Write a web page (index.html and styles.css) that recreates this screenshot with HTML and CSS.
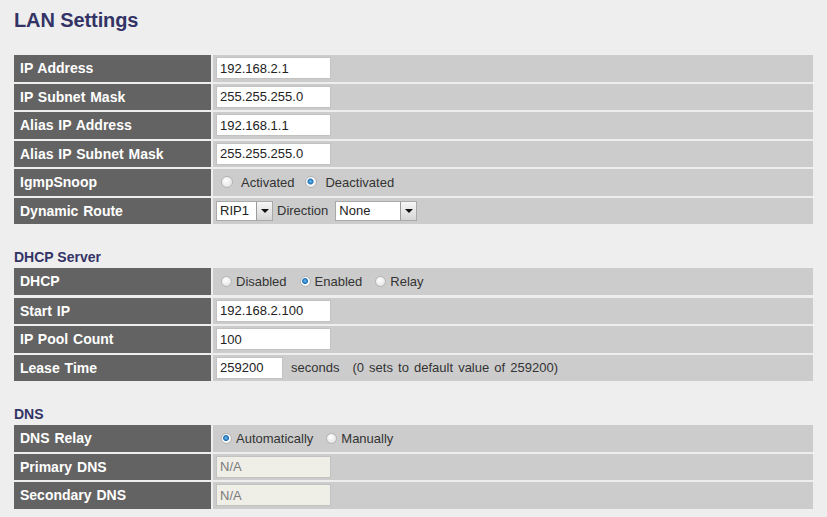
FILE: index.html
```html
<!DOCTYPE html>
<html lang="en">
<head>
    <meta charset="UTF-8">
    <meta name="viewport" content="width=device-width, initial-scale=1.0">
    <title>LAN Settings</title>
    <link rel="stylesheet" href="styles.css">
</head>
<body>
    <h1 class="page-title">LAN Settings</h1>

    <div class="form-grid">
        <div class="label">IP Address</div>
        <div class="value"><input class="field" type="text" value="192.168.2.1"></div>

        <div class="label">IP Subnet Mask</div>
        <div class="value"><input class="field" type="text" value="255.255.255.0"></div>

        <div class="label">Alias IP Address</div>
        <div class="value"><input class="field" type="text" value="192.168.1.1"></div>

        <div class="label">Alias IP Subnet Mask</div>
        <div class="value"><input class="field" type="text" value="255.255.255.0"></div>

        <div class="label">IgmpSnoop</div>
        <div class="value wide-options">
            <label class="option"><input class="radio" type="radio" name="igmp">Activated</label>
            <label class="option"><input class="radio" type="radio" name="igmp" checked>Deactivated</label>
        </div>

        <div class="label">Dynamic Route</div>
        <div class="value">
            <span class="dropdown rip">
                <select><option>RIP1</option><option>RIP2</option></select>
                <span class="arrow"></span>
            </span>
            <span class="direction">Direction</span>
            <span class="dropdown dir">
                <select><option>None</option><option>Both</option><option>In Only</option><option>Out Only</option></select>
                <span class="arrow"></span>
            </span>
        </div>
    </div>

    <h2 class="section-title">DHCP Server</h2>
    <div class="form-grid">
        <div class="label">DHCP</div>
        <div class="value">
            <label class="option"><input class="radio" type="radio" name="dhcp">Disabled</label>
            <label class="option"><input class="radio" type="radio" name="dhcp" checked>Enabled</label>
            <label class="option"><input class="radio" type="radio" name="dhcp">Relay</label>
        </div>
    </div>
    <div class="form-grid spaced">
        <div class="label">Start IP</div>
        <div class="value"><input class="field" type="text" value="192.168.2.100"></div>

        <div class="label">IP Pool Count</div>
        <div class="value"><input class="field" type="text" value="100"></div>

        <div class="label">Lease Time</div>
        <div class="value">
            <input class="field short" type="text" value="259200">
            <span class="unit">seconds</span>
            <span class="hint">(0 sets to default value of 259200)</span>
        </div>
    </div>

    <h2 class="section-title">DNS</h2>
    <div class="form-grid">
        <div class="label">DNS Relay</div>
        <div class="value">
            <label class="option"><input class="radio" type="radio" name="dns" checked>Automatically</label>
            <label class="option"><input class="radio" type="radio" name="dns">Manually</label>
        </div>

        <div class="label">Primary DNS</div>
        <div class="value"><input class="field" type="text" value="N/A" disabled></div>

        <div class="label">Secondary DNS</div>
        <div class="value"><input class="field" type="text" value="N/A" disabled></div>
    </div>
</body>
</html>
```

FILE: styles.css
```css
body {
    margin: 0;
    padding: 0 14px;
    background: #eeeeee;
    font-family: 'Liberation Sans', Arial, sans-serif;
    font-size: 13px;
    color: #333;
}

.page-title {
    margin: 0;
    padding-top: 8px;
    font-size: 20px;
    line-height: 24px;
    color: #333366;
    letter-spacing: -0.1px;
}

.section-title {
    margin: 25px 0 3px;
    font-size: 14px;
    line-height: 16px;
    color: #333366;
}

.form-grid {
    display: grid;
    grid-template-columns: 197px 1fr;
    grid-auto-rows: 26.5px;
    gap: 2px;
}

.page-title + .form-grid {
    margin-top: 23px;
}

.form-grid.spaced {
    margin-top: 3px;
}

.label {
    display: flex;
    align-items: center;
    padding-left: 6px;
    background: #636363;
    color: #fff;
    font-size: 14px;
    font-weight: bold;
    word-spacing: 1px;
}

.value {
    display: flex;
    align-items: center;
    padding-left: 3px;
    background: #cccccc;
}

.field {
    box-sizing: border-box;
    width: 115px;
    height: 22px;
    margin: 0;
    padding: 0 3px;
    border: 1px solid #c2c2c2;
    background: #fff;
    font-family: inherit;
    font-size: 13px;
    color: #222;
}

.field.short {
    width: 67px;
}

.field:disabled {
    background: #efeee7;
    color: #7a7a7a;
}

.option {
    display: flex;
    align-items: center;
    margin-right: 8px;
}

.radio {
    appearance: none;
    -webkit-appearance: none;
    width: 11px;
    height: 11px;
    margin: 0 4px 0 5px;
    border: 1px solid #b4b4b4;
    border-radius: 50%;
    background: radial-gradient(circle at 40% 35%, #ffffff, #dcdcdc);
}

.wide-options .radio {
    width: 12px;
    height: 12px;
    margin-right: 8px;
}

.wide-options .option {
    margin-right: 6px;
}

.radio:checked {
    background: radial-gradient(circle at 45% 45%, #6cc0f2 0, #1f6fb5 2.5px, #ffffff 3.5px, #e2e2e2 6px);
}

.unit {
    margin-left: 8px;
}

.hint {
    margin-left: 13px;
    word-spacing: 1.5px;
}

.dropdown {
    display: inline-flex;
    box-sizing: border-box;
    height: 20px;
    border: 1px solid #a9a9a9;
    background: #fff;
}

.dropdown select {
    appearance: none;
    -webkit-appearance: none;
    border: none;
    background: transparent;
    padding: 0 0 0 3px;
    margin: 0;
    font-family: inherit;
    font-size: 13px;
    color: #222;
    outline: none;
}

.dropdown.rip select {
    width: 39px;
}

.dropdown.dir select {
    width: 64px;
}

.arrow {
    display: flex;
    align-items: center;
    justify-content: center;
    width: 15px;
    border-left: 1px solid #9a9a9a;
    background: linear-gradient(#f6f6f6, #d6d6d6);
}

.arrow::after {
    content: "";
    border-left: 4px solid transparent;
    border-right: 4px solid transparent;
    border-top: 4px solid #111;
}

.direction {
    margin: 0 7px 0 4px;
}
```
